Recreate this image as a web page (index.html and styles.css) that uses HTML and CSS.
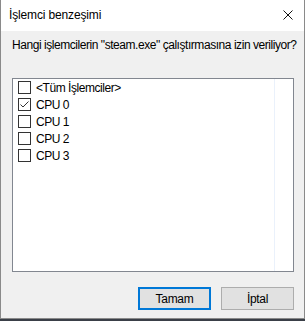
FILE: index.html
```html
<!DOCTYPE html>
<html lang="tr">
<head>
    <meta charset="UTF-8">
    <title>İşlemci benzeşimi</title>
    <link rel="stylesheet" href="styles.css">
</head>
<body>
    <div class="window">
        <div class="titlebar">
            <span class="title">İşlemci benzeşimi</span>
            <svg class="close" width="10" height="10" viewBox="0 0 10 10">
                <path d="M0.5 0.5 L9.5 9.5 M9.5 0.5 L0.5 9.5" stroke="#111" stroke-width="1" fill="none"/>
            </svg>
        </div>
        <div class="content">
            <p class="question">Hangi işlemcilerin "steam.exe" çalıştırmasına izin veriliyor?</p>
            <div class="list">
                <div class="row"><span class="box"></span><span>&lt;Tüm İşlemciler&gt;</span></div>
                <div class="row"><span class="box checked">
                    <svg width="11" height="11" viewBox="0 0 11 11"><path d="M1.5 5.5 L4 8 L9.5 2.5" stroke="#333" stroke-width="1" fill="none"/></svg>
                </span><span>CPU 0</span></div>
                <div class="row"><span class="box"></span><span>CPU 1</span></div>
                <div class="row"><span class="box"></span><span>CPU 2</span></div>
                <div class="row"><span class="box"></span><span>CPU 3</span></div>
                <div class="divider"></div>
            </div>
            <div class="buttons">
                <button class="btn default">Tamam</button>
                <button class="btn">İptal</button>
            </div>
        </div>
    </div>
</body>
</html>
```

FILE: styles.css
```css
html, body {
    margin: 0;
    padding: 0;
    background: #3a3f47;
}
body {
    font-family: "Liberation Sans", Arial, sans-serif;
    font-size: 12px;
    letter-spacing: -0.45px;
    color: #000;
}
.window {
    width: 303px;
    height: 318px;
    border: 1px solid #8a8a8a;
    border-top: none;
    background: #f0f0f0;
    display: flex;
    flex-direction: column;
}
.titlebar {
    height: 31px;
    background: #fff;
    display: flex;
    align-items: center;
    justify-content: space-between;
    padding: 0 11px 0 8px;
}
.title {
    font-size: 12px;
    letter-spacing: -0.15px;
    color: #000;
    margin-top: -1px;
}
.close {
    display: block;
    margin-top: -1px;
}
.content {
    flex: 1;
    padding: 0 10px 0 11px;
    display: flex;
    flex-direction: column;
}
.question {
    margin: 6px 0 0 0;
    line-height: 16px;
    white-space: nowrap;
}
.list {
    position: relative;
    margin: 25px 0 0 0;
    width: 280px;
    height: 192px;
    background: #fff;
    border: 1px solid #828790;
    box-sizing: content-box;
}
.row {
    display: flex;
    align-items: center;
    height: 17px;
    padding-left: 5px;
    gap: 5px;
}
.box {
    width: 11px;
    height: 11px;
    border: 1px solid #333;
    background: #fff;
    display: flex;
}
.box svg {
    display: block;
}
.divider {
    position: absolute;
    top: 0;
    bottom: 0;
    left: 261px;
    width: 1px;
    background: #eaf1fb;
}
.buttons {
    display: flex;
    justify-content: flex-end;
    gap: 10px;
    margin-top: 15px;
}
.btn {
    width: 73px;
    height: 23px;
    font-family: "Liberation Sans", Arial, sans-serif;
    font-size: 12px;
    letter-spacing: -0.3px;
    color: #000;
    background: #e1e1e1;
    border: 1px solid #adadad;
    padding: 0;
    margin: 0;
}
.btn.default {
    border: 2px solid #0078d7;
}
```
